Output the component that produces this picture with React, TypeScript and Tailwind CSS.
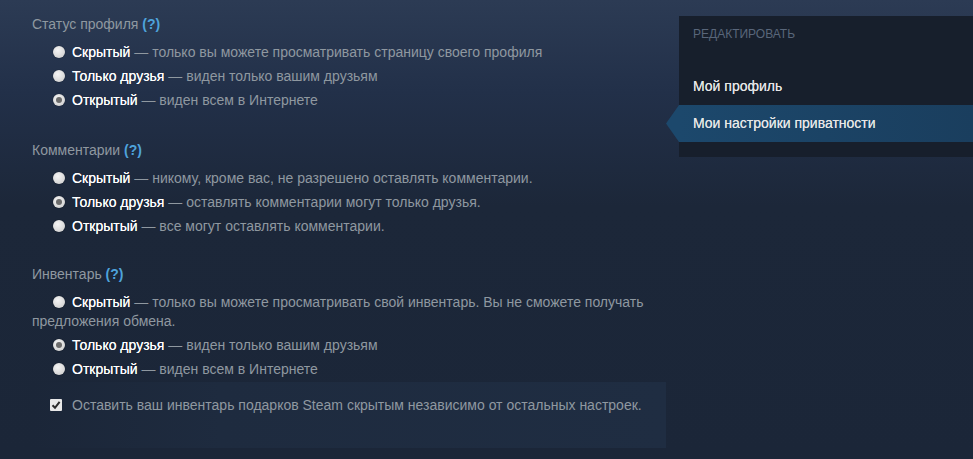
import React from "react";

type Opt = { label: string; desc: string; checked?: boolean };

function Radio({ checked }: { checked?: boolean }) {
  return (
    <span className="relative inline-block w-[12px] h-[12px] rounded-full bg-[radial-gradient(circle_at_40%_35%,#f4f4f4,#c9c9c9)] shadow-[0_0_1px_rgba(0,0,0,0.6)] align-[-1px] mr-[7px] ml-[21px]">
      {checked && (
        <span className="absolute left-[3px] top-[3px] w-[6px] h-[6px] rounded-full bg-[#6b6b6b]" />
      )}
    </span>
  );
}

function Section({ title, opts, first }: { title: string; opts: Opt[]; first?: boolean }) {
  return (
    <div className={first ? "" : "mt-[31px]"}>
      <div className="leading-[19px] text-[#8f98a0]">
        {title} <span className="text-[#4ea3dc] font-bold">(?)</span>
      </div>
      <div className="mt-[9px] flex flex-col gap-[5px]">
        {opts.map((o, i) => (
          <div key={i} className="leading-[19px] text-[#8f98a0] pr-[10px]">
            <Radio checked={o.checked} />
            <span className="text-white [text-shadow:0_0_0.6px_rgba(255,255,255,0.9)]">{o.label}</span> — {o.desc}
          </div>
        ))}
      </div>
    </div>
  );
}

export default function App() {
  return (
    <div
      className="w-[973px] h-[459px] overflow-hidden bg-[linear-gradient(180deg,#2c3b54_0%,#223049_20%,#1c2739_45%,#1b2638_100%)] text-[14px]"
      style={{ fontFamily: '"Liberation Sans", Arial, sans-serif' }}
    >
      <div className="flex">
        <div className="w-[636px] ml-[30px] pt-[15px]">
          <div className="pl-[2px]">
            <Section
              first
              title="Статус профиля"
              opts={[
                { label: "Скрытый", desc: "только вы можете просматривать страницу своего профиля" },
                { label: "Только друзья", desc: "виден только вашим друзьям" },
                { label: "Открытый", desc: "виден всем в Интернете", checked: true },
              ]}
            />
            <Section
              title="Комментарии"
              opts={[
                { label: "Скрытый", desc: "никому, кроме вас, не разрешено оставлять комментарии." },
                { label: "Только друзья", desc: "оставлять комментарии могут только друзья.", checked: true },
                { label: "Открытый", desc: "все могут оставлять комментарии." },
              ]}
            />
            <div className="mt-[29px]">
              <Section
                first
                title="Инвентарь"
                opts={[
                  {
                    label: "Скрытый",
                    desc: "только вы можете просматривать свой инвентарь. Вы не сможете получать предложения обмена.",
                  },
                  { label: "Только друзья", desc: "виден только вашим друзьям", checked: true },
                  { label: "Открытый", desc: "виден всем в Интернете" },
                ]}
              />
            </div>
          </div>
          <div className="mt-[3px] h-[66px] bg-[linear-gradient(90deg,#1b2638_0%,#1e2b3f_30%,#1f2d42_100%)] pt-[14px] pl-[20px] flex items-start">
            <span className="mt-[3px] inline-flex items-center justify-center w-[12px] h-[12px] bg-[#e8e8e8] rounded-[1px]">
              <svg width="10" height="10" viewBox="0 0 10 10">
                <path d="M1.5 5.2 L4 7.8 L8.6 1.8" stroke="#2a2a2a" strokeWidth="2" fill="none" />
              </svg>
            </span>
            <span className="ml-[10px] leading-[19px] text-[#8f98a0]">
              Оставить ваш инвентарь подарков Steam скрытым независимо от остальных настроек.
            </span>
          </div>
        </div>
        <div className="ml-[13px] mt-[16px] w-[294px] h-[141px] bg-[#171f2c] flex flex-col">
          <div className="pl-[14px] pt-[11px] text-[12px] leading-[14px] text-[#59667a] uppercase">
            Редактировать
          </div>
          <div className="pl-[14px] mt-[36px] leading-[19px] text-[#e6e6e6] [text-shadow:0_0_0.5px_rgba(255,255,255,0.8)]">
            Мой профиль
          </div>
          <div className="relative mt-[9px] h-[37px] bg-[linear-gradient(90deg,#1c486c_0%,#1a3e5e_100%)] flex items-center pl-[14px] text-[#e6e6e6] [text-shadow:0_0_0.5px_rgba(255,255,255,0.8)]">
            <span
              className="absolute left-[-13px] top-0 w-[13px] h-[37px] bg-[#1c486c]"
              style={{ clipPath: "polygon(100% 0, 0 50%, 100% 100%)" }}
            />
            Мои настройки приватности
          </div>
        </div>
      </div>
    </div>
  );
}
